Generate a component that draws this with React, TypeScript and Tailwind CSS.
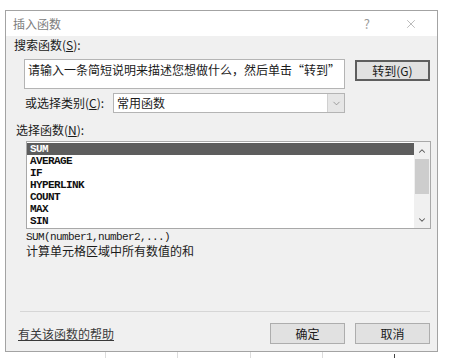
import { ChevronDown, ChevronUp, X } from "lucide-react";

const functions = ["SUM", "AVERAGE", "IF", "HYPERLINK", "COUNT", "MAX", "SIN"];

const cjk = "font-['Noto_Sans_CJK_SC','Noto_Sans',sans-serif]";
const mono = "font-['Liberation_Mono','Noto_Sans_CJK_SC',monospace]";

function DialogButton({ label, focused = false }: { label: string; focused?: boolean }) {
  return (
    <div
      className={
        "flex h-[21px] w-[75px] items-center justify-center bg-[#e1e1e1] text-[12px] text-[#1a1a1a] " +
        (focused ? "border-2 border-[#5e5e5e]" : "border border-[#adadad]")
      }
    >
      {label}
    </div>
  );
}

export default function App() {
  return (
    <div className={`h-[358px] w-[458px] overflow-hidden bg-white ${cjk}`}>
      <div className="ml-[5px] mt-[10px] flex h-[342px] w-[433px] flex-col border border-[#a3a3a3] bg-[#f0f0f0]">
        {/* title bar */}
        <div className="flex h-[25px] shrink-0 items-center bg-white pl-[7px] text-[12px] text-[#7d7d7d]">
          <span>插入函数</span>
          <span className="ml-auto mr-[34px] text-[13px] text-[#9a9a9a]">?</span>
          <X className="mr-[19px] h-[14px] w-[14px] text-[#8a8a8a]" strokeWidth={1} />
        </div>

        <div className="mt-[1px] flex h-[16px] items-center pl-[8px] text-[12px] text-[#1a1a1a]">
          搜索函数(<span className="underline">S</span>):
        </div>

        <div className="mt-[6px] flex items-start">
          <div className="ml-[18px] h-[30px] w-[321px] border border-[#b4b4b4] bg-white pl-[3px] pt-[2px] text-[12px] leading-[16px] text-[#1a1a1a]">
            请输入一条简短说明来描述您想做什么，然后单击“转到”
          </div>
          <div className="ml-[10px] mt-[1px]">
            <DialogButton label="转到(G)" focused />
          </div>
        </div>

        <div className="mt-[4px] flex items-center">
          <span className="ml-[19px] w-[88px] text-[12px] text-[#1a1a1a]">
            或选择类别(<span className="underline">C</span>):
          </span>
          <div className="flex h-[20px] w-[232px] items-center border border-[#b4b4b4] bg-white">
            <span className="pl-[3px] text-[12px] text-[#1a1a1a]">常用函数</span>
            <div className="ml-auto flex h-full w-[17px] items-center justify-center border-l border-[#d0d0d0] bg-[#e6e6e6]">
              <ChevronDown className="h-[11px] w-[11px] text-[#7a7a7a]" strokeWidth={1.5} />
            </div>
          </div>
        </div>

        <div className="mt-[9px] flex h-[16px] items-center pl-[10px] text-[12px] text-[#1a1a1a]">
          选择函数(<span className="underline">N</span>):
        </div>

        <div className="ml-[20px] mt-[3px] flex h-[88px] w-[405px] border border-[#a8a8a8] bg-white">
          <div className="flex flex-1 flex-col pt-[1px]">
            {functions.map((name, index) => (
              <div
                key={name}
                className={
                  `h-[12px] pl-[3px] text-[11px] font-bold leading-[12px] tracking-[-0.6px] ${mono} ` +
                  (index === 0 ? "bg-[#5d5d5d] text-white" : "text-[#111]")
                }
              >
                {name}
              </div>
            ))}
          </div>
          <div className="flex w-[16px] flex-col items-center bg-[#f0f0f0]">
            <div className="flex h-[17px] items-center justify-center">
              <ChevronUp className="h-[10px] w-[10px] text-[#555]" strokeWidth={2.5} />
            </div>
            <div className="h-[35px] w-[14px] bg-[#cdcdcd]" />
            <div className="mt-auto flex h-[17px] items-center justify-center">
              <ChevronDown className="h-[10px] w-[10px] text-[#555]" strokeWidth={2.5} />
            </div>
          </div>
        </div>

        <div className={`ml-[20px] mt-[2px] h-[13px] text-[11px] leading-[13px] tracking-[-0.6px] text-[#1a1a1a] ${mono}`}>
          SUM(number1,number2,...)
        </div>
        <div className="ml-[20px] h-[14px] text-[12px] leading-[14px] text-[#1a1a1a]">计算单元格区域中所有数值的和</div>

        <div className="ml-[14px] mt-[53px] h-px w-[410px] bg-[#d6d6d6]" />

        <div className="mt-[11px] flex items-center">
          <span className="ml-[12px] text-[12px] text-[#3a3a3a] underline">有关该函数的帮助</span>
          <div className="ml-auto mr-[10px]">
            <DialogButton label="确定" />
          </div>
          <div className="mr-[7px]">
            <DialogButton label="取消" />
          </div>
        </div>
      </div>

      {/* spreadsheet gridlines peeking out below the dialog */}
      <div className="flex h-[6px]">
        <div className="w-[105px]" />
        <div className="w-[72px] border-l border-[#dcdcdc]" />
        <div className="w-[73px] border-l border-[#dcdcdc]" />
        <div className="w-[72px] border-l border-[#dcdcdc]" />
        <div className="w-[72px] border-l border-[#dcdcdc]" />
        <div className="mt-[2px] h-[4px] border-l border-[#444]" />
      </div>
    </div>
  );
}
